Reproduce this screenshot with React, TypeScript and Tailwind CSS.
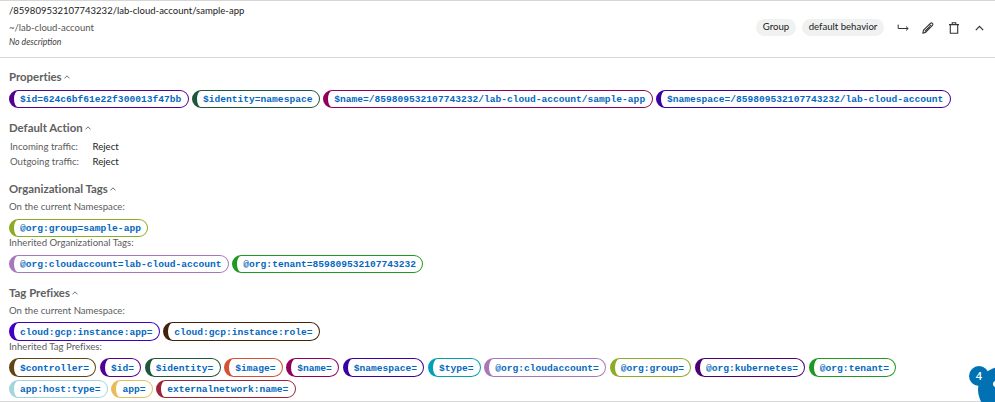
import React from "react";

type Tag = { text: string; box: string };

function Chip({ text, box, tall }: Tag & { tall?: boolean }) {
  return (
    <span
      className={`flex shrink-0 items-center whitespace-pre border border-l-[5px] pl-[6px] pr-[6.4px] pt-[2px] font-['Liberation_Mono',monospace] text-[9.6px] font-bold leading-none text-[#0568c0] ${
        tall ? "h-[19px] rounded-[9.5px]" : "h-[18px] rounded-[9px]"
      } ${box}`}
    >
      {text}
    </span>
  );
}

function Chips({ tags, tall, className = "" }: { tags: Tag[]; tall?: boolean; className?: string }) {
  return (
    <div className={`flex gap-[3.45px] ${className}`}>
      {tags.map((t) => (
        <Chip key={t.text} tall={tall} {...t} />
      ))}
    </div>
  );
}

function Heading({ children }: { children: React.ReactNode }) {
  return (
    <h2 className="flex h-4 items-center gap-[2.5px] text-[11.4px] font-bold leading-4 text-[#606060] [font-variant-ligatures:none]">
      <span>{children}</span>
      <svg width="6" height="4" viewBox="0 0 6 4" fill="none" stroke="#606060" strokeWidth="0.9">
        <path d="M0.5 3.4 3 0.8l2.5 2.6" />
      </svg>
    </h2>
  );
}

function Label({ children }: { children: React.ReactNode }) {
  return (
    <p className="h-3 text-[9.6px] leading-3 text-[#5c5c5c] [font-variant-ligatures:none]">{children}</p>
  );
}

const properties: Tag[] = [
  { text: "$id=624c6bf61e22f300013f47bb", box: "border-[#540094]" },
  { text: "$identity=namespace", box: "border-[#1f573b]" },
  { text: "$name=/859809532107743232/lab-cloud-account/sample-app", box: "border-[#91005b]" },
  { text: "$namespace=/859809532107743232/lab-cloud-account", box: "border-[#3900a3]" },
];
const orgCurrent: Tag[] = [{ text: "@org:group=sample-app", box: "border-[#8dab25]" }];
const orgInherited: Tag[] = [
  { text: "@org:cloudaccount=lab-cloud-account", box: "border-[#a678b9]" },
  { text: "@org:tenant=859809532107743232", box: "border-[#1f991f]" },
];
const prefixes: Tag[] = [
  { text: "cloud:gcp:instance:app=", box: "border-[#3d00c4]" },
  { text: "cloud:gcp:instance:role=", box: "border-[#422208]" },
];
const inherited: Tag[] = [
  { text: "$controller=", box: "border-[#624313]" },
  { text: "$id=", box: "border-[#540094]" },
  { text: "$identity=", box: "border-[#1f573b]" },
  { text: "$image=", box: "border-[#d35231]" },
  { text: "$name=", box: "border-[#91005b]" },
  { text: "$namespace=", box: "border-[#3900a3]" },
  { text: "$type=", box: "border-[#00a1b5]" },
  { text: "@org:cloudaccount=", box: "border-[#a678b9]" },
  { text: "@org:group=", box: "border-[#8dab25]" },
  { text: "@org:kubernetes=", box: "border-[#4c0073]" },
  { text: "@org:tenant=", box: "border-[#1f991f]" },
];
const inheritedMore: Tag[] = [
  { text: "app:host:type=", box: "border-[#a3d5dc]" },
  { text: "app=", box: "border-[#e6bd58]" },
  { text: "externalnetwork:name=", box: "border-[#9b243c]" },
];

export default function App() {
  return (
    <div className="relative h-[402px] w-[995px] overflow-hidden whitespace-nowrap border-t border-[#d6d6d6] bg-white font-['Lato',sans-serif]">
      <header className="flex h-[57px] justify-between border-b border-[#d6d6d6] pl-[9px] pr-[11px]">
        <div className="pt-[2px]">
          <div className="h-4 text-[9.52px] leading-4 text-[#1a1a1a]">/859809532107743232/lab-cloud-account/sample-app</div>
          <div className="mt-px h-4 text-[9.5px] leading-4 text-[#555]">~/lab-cloud-account</div>
          <div className="h-3 text-[8.7px] italic leading-3 text-[#3c3c3c]">No description</div>
        </div>
        <div className="mt-[18px] flex h-[17px] items-center text-[9.6px] leading-[17px] text-[#222]">
          <span className="h-[17px] w-10 rounded-full bg-[#f0f1f1] text-center leading-[15px]">Group</span>
          <span className="ml-1.5 h-[17px] w-[82px] rounded-full bg-[#f0f1f1] text-center leading-[15px]">
            default behavior
          </span>
          <svg className="ml-[13px]" width="12" height="12" viewBox="0 0 12 12" fill="none" stroke="#333" strokeWidth="1">
            <path d="M1.2 2.6v3.9h9.9M9 4.5l2.2 2-2.2 2" />
          </svg>
          <svg className="ml-[13px]" width="12" height="12" viewBox="0 0 12 12" fill="none" stroke="#333" strokeWidth="1.1" strokeLinejoin="round">
            <path d="M.8 11.2l.7-3 6.9-6.9q1-.9 2 0t0 2L3.6 10.4zM7.3 2.4l2.1 2M2.8 9.3l5-5" />
          </svg>
          <svg className="ml-[14px]" width="12" height="12" viewBox="0 0 12 12" fill="none" stroke="#333" strokeWidth="1.1">
            <path d="M1 2.6h10M4.2 2.4V.8h3.6v1.6M2.3 2.8v8.4h7.4V2.8" />
          </svg>
          <svg className="ml-[15px]" width="9" height="6" viewBox="0 0 9 6" fill="none" stroke="#333" strokeWidth="1.2">
            <path d="M.8 5.1l3.7-3.8 3.7 3.8" />
          </svg>
        </div>
      </header>
      <main className="h-[344px] border-b border-[#d6d6d6] pl-[9px] pt-[11px]">
        <section className="h-[51px]">
          <Heading>Properties</Heading>
          <Chips tags={properties} className="mt-[5px]" />
        </section>
        <section className="h-[61px]">
          <Heading>Default Action</Heading>
          <dl className="ml-px mt-[3px] grid grid-cols-[82.5px_auto] justify-start text-[9.6px] leading-[15px] text-[#5c5c5c]">
            <dt>Incoming traffic:</dt>
            <dd className="text-[#222]">Reject</dd>
            <dt>Outgoing traffic:</dt>
            <dd className="text-[#222]">Reject</dd>
          </dl>
        </section>
        <section className="h-[104px]">
          <Heading>Organizational Tags</Heading>
          <div className="pt-[4px]">
            <Label>On the current Namespace:</Label>
            <Chips className="mt-[6px]" tags={orgCurrent} />
            <Label>Inherited Organizational Tags:</Label>
            <Chips className="mt-[6px]" tags={orgInherited} />
          </div>
        </section>
        <section>
          <Heading>Tag Prefixes</Heading>
          <div className="pt-[4px]">
            <Label>On the current Namespace:</Label>
            <Chips tall className="mt-[5px]" tags={prefixes} />
            <Label>Inherited Tag Prefixes:</Label>
            <Chips tall className="mt-[5px]" tags={inherited} />
            <Chips className="mt-[3px]" tags={inheritedMore} />
          </div>
        </section>
      </main>
      <div className="absolute left-[978px] top-[366px] h-[46px] w-[46px] rounded-full bg-[#0071b2] shadow-[0_0_10px_rgba(0,0,80,0.04)]">
        <span className="absolute left-[15px] top-[14px] h-[6px] w-[7px] rounded-full bg-white" />
      </div>
      <span className="absolute left-[969px] top-[365px] h-5 w-5 rounded-full bg-[#0071b2] text-center font-['Open_Sans',sans-serif] text-[11px] font-semibold leading-5 text-white">
        4
      </span>
    </div>
  );
}
